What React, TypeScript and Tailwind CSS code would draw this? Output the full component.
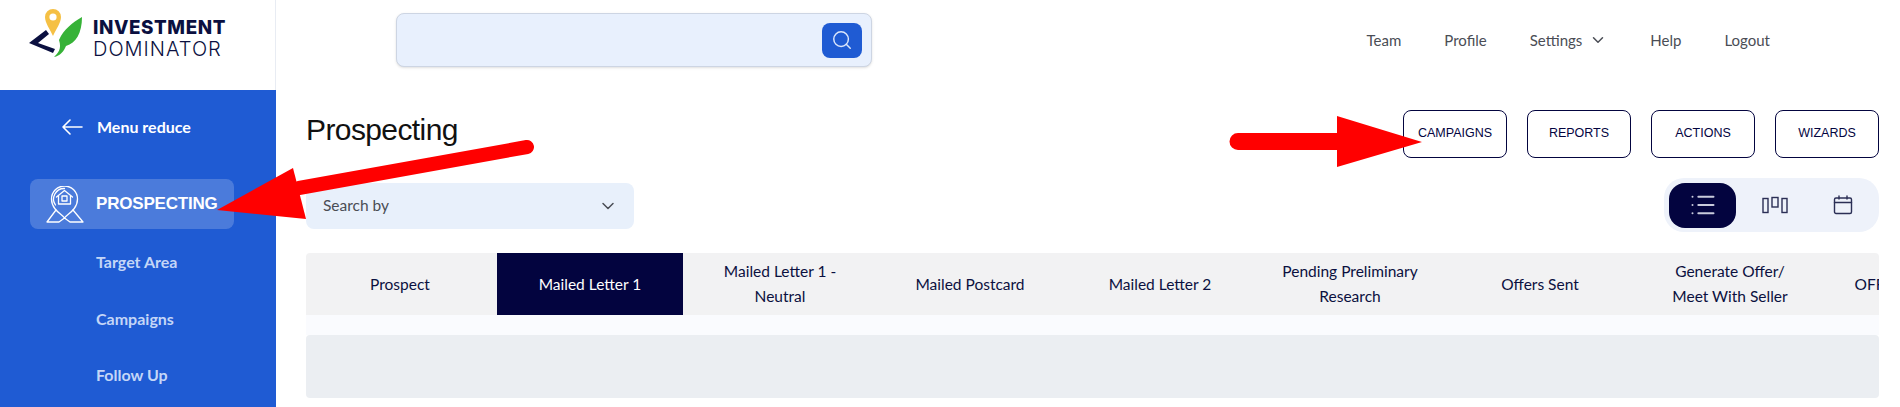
import React from 'react';
import { ChevronDown, List, Search } from 'lucide-react';

const tabs = [
    'Prospect',
    'Mailed Letter 1',
    'Mailed Letter 1 - Neutral',
    'Mailed Postcard',
    'Mailed Letter 2',
    'Pending Preliminary Research',
    'Offers Sent',
    'Generate Offer/\nMeet With Seller',
    'OFFER ACCEPTED',
];

const actions = ['CAMPAIGNS', 'REPORTS', 'ACTIONS', 'WIZARDS'];
const subItems = ['Target Area', 'Campaigns', 'Follow Up'];

const Logo = () => (
    <div className="flex h-[90px] w-[276px] shrink-0 items-start border-r border-[#e8ecf3] bg-white">
        <svg width="64" height="60" viewBox="0 0 64 60" className="mt-[3px] ml-[26px] shrink-0">
            <path d="M27 6a8 8 0 0 1 8 8c0 6-5 12-8 19c-3-7-8-13-8-19a8 8 0 0 1 8-8z" fill="#f5c044" />
            <circle cx="27" cy="14" r="3.6" fill="#fff" />
            <path d="M20 27L3 40L27 50L29 46L12 40L23 31z" fill="#0b1040" />
            <path d="M56 14C46 20 38 26 33 37C36 46 32 50 28 54C34 53 38 48 40 43C50 40 56 30 56 14z" fill="#36b237" />
        </svg>
        <div className="mt-[17px] ml-[3px] font-['Inter',sans-serif] text-[#0b1040]">
            <div className="text-[18.800px] leading-[21px] font-extrabold tracking-[0.6px]">INVESTMENT</div>
            <div className="text-[20px] leading-[22px] font-light tracking-[1px]">DOMINATOR</div>
        </div>
    </div>
);

const PinIcon = () => (
    <svg width="38" height="37" viewBox="0 0 38 37" fill="none" stroke="#fff" strokeWidth="1.3" strokeLinejoin="round" strokeLinecap="round">
        <path d="M18.500 32c-2-3.500-13-8-13-19a13 13 0 0 1 26 0c0 11-11 15.500-13 19z" />
        <path d="M9.500 19a10.500 10.500 0 0 1 9-16.500" />
        <path d="M10.500 11l8-6.500l8 6.500" />
        <path d="M12.500 10v8h12v-8" />
        <rect x="16" y="10" width="5" height="5" />
        <path d="M10 24L1 36h12l5.500-4l5.500 4h13L27 24" />
    </svg>
);

const BackArrow = () => (
    <svg width="22" height="16" viewBox="0 0 22 16" fill="none" stroke="#fff" strokeWidth="1.6" strokeLinecap="round" strokeLinejoin="round">
        <path d="M21 8H2M9 1L2 8l7 7" />
    </svg>
);

const KanbanIcon = () => (
    <svg width="26" height="18" viewBox="0 0 26 18" fill="none" stroke="#2b2f55" strokeWidth="1.4">
        <rect x="1" y="2.500" width="5" height="14" />
        <rect x="10" y="1.500" width="6" height="9.500" />
        <rect x="20" y="2.500" width="5" height="14" />
    </svg>
);

const CalendarIcon = () => (
    <svg width="20" height="20" viewBox="0 0 20 20" fill="none" stroke="#2b2f55" strokeWidth="1.4" strokeLinecap="round">
        <rect x="1.500" y="3" width="17" height="15.500" rx="1.500" />
        <path d="M1.500 7.500h17M6 1v3M14 1v3" />
    </svg>
);

export default function App() {
    return (
        <div className="relative flex h-[407px] w-[1900px] overflow-hidden bg-white font-['Lato',sans-serif]">
            <aside className="flex w-[276px] shrink-0 flex-col">
                <Logo />
                <div className="flex-1 bg-[#1f5bd3]">
                    <div className="mt-[26px] ml-[61px] flex items-center gap-[14px] text-[16px] leading-[22px] font-bold text-white">
                        <BackArrow />
                        Menu reduce
                    </div>
                    <div className="mt-[41px] ml-[30px] flex h-[50px] w-[204px] items-center rounded-lg bg-white/20 pl-[16px]">
                        <PinIcon />
                        <span className="ml-[12px] font-['Liberation_Sans',sans-serif] text-[17px] font-bold tracking-[-0.2px] text-white">PROSPECTING</span>
                    </div>
                    <ul className="mt-[5px] ml-[96px]">
                        {subItems.map(item => (
                            <li key={item} className="flex h-[56.500px] items-center text-[16px] font-bold text-[#c4d6f7]">{item}</li>
                        ))}
                    </ul>
                </div>
            </aside>

            <main className="min-w-0 flex-1">
                <header className="flex h-[90px] items-start">
                    <div className="mt-[13px] ml-[120px] flex h-[54px] w-[476px] items-center justify-end rounded-lg border border-[#cdd5e3] bg-[#e8f0fd] pr-[9px] shadow-sm">
                        <button className="flex h-[35px] w-[40px] items-center justify-center rounded-lg bg-[#1f5bd3]">
                            <Search className="h-[22px] w-[22px] text-[#dbe6fb]" strokeWidth={1.6} />
                        </button>
                    </div>
                    <nav className="mt-[29px] mr-[130px] ml-auto flex items-center gap-[43px] text-[15px] leading-[22px] text-[#4a4d55]">
                        <a>Team</a>
                        <a>Profile</a>
                        <a className="flex items-center gap-[7px]">Settings <ChevronDown className="h-[18px] w-[18px]" strokeWidth={2} /></a>
                        <a>Help</a>
                        <a>Logout</a>
                    </nav>
                </header>

                <div className="pr-[21px] pl-[30px]">
                    <div className="mt-[20px] flex h-[48px] items-center justify-between">
                        <h1 className="mb-[9px] font-['Liberation_Sans',sans-serif] text-[30px] tracking-[-0.6px] text-[#111]">Prospecting</h1>
                        <div className="flex gap-[20px]">
                            {actions.map(label => (
                                <button key={label} className="h-[48px] w-[104px] rounded-lg border border-[#03043f] pb-[2px] font-['Liberation_Sans',sans-serif] text-[12.500px] text-[#03043f]">{label}</button>
                            ))}
                        </div>
                    </div>

                    <div className="mt-[20px] flex h-[54px] items-center justify-between">
                        <div className="mt-[2px] flex h-[46px] w-[328px] items-center justify-between rounded-lg bg-[#e8f0fb] pr-[16px] pl-[17px] text-[15.500px] text-[#4a4d55]">
                            Search by
                            <ChevronDown className="h-[20px] w-[20px]" strokeWidth={1.8} />
                        </div>
                        <div className="flex h-[54px] w-[215px] items-center rounded-[20px] bg-[#eef2fa] pl-[5px]">
                            <div className="flex h-[45px] w-[67px] items-center justify-center rounded-[16px] bg-[#03043f]">
                                <List className="h-[28px] w-[28px] text-[#c9cbdc]" strokeWidth={1.7} />
                            </div>
                            <div className="ml-[26px] flex"><KanbanIcon /></div>
                            <div className="ml-[45px] flex"><CalendarIcon /></div>
                        </div>
                    </div>

                    <div className="mt-[21px] flex h-[62px] overflow-hidden rounded-t bg-[#f2f2f3]">
                        {tabs.map(tab => (
                            <div key={tab} className="flex w-[190px] shrink-0 pr-[3px] pl-[1px]">
                                <div className={`flex flex-1 items-center justify-center px-[20px] text-center text-[15.500px] leading-[25px] whitespace-pre-line ${tab === 'Mailed Letter 1' ? 'bg-[#03043f] text-white' : 'text-[#0b1040]'}`}>{tab}</div>
                            </div>
                        ))}
                    </div>
                    <div className="h-[20px] bg-[#fafbfe]" />
                    <div className="h-[63px] rounded bg-[#ebeef2]" />
                </div>
            </main>

            {/* red annotation arrows sit over the page */}
            <svg width="330" height="100" viewBox="0 0 330 100" className="absolute top-[130px] left-[215px]">
                <path d="M2 80L78 38l13 51z" fill="#f00" />
                <path d="M84 58L312 17" stroke="#f00" strokeWidth="14" strokeLinecap="round" />
            </svg>
            <svg width="200" height="55" viewBox="0 0 200 55" className="absolute top-[115px] left-[1228px]">
                <path d="M10 18H109V1L194 27L109 52V35H10a8.500 8.500 0 0 1 0-17z" fill="#f00" />
            </svg>
        </div>
    );
}
